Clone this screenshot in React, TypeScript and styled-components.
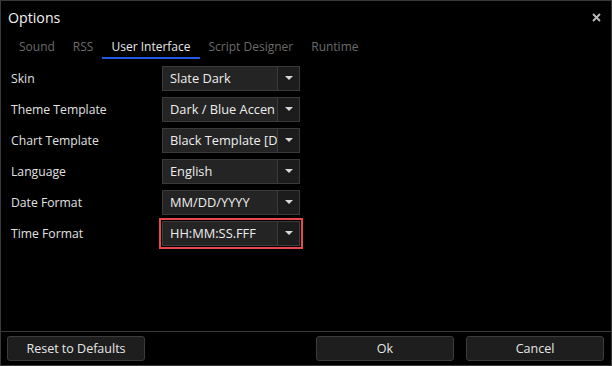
import React from "react";
import styled, { createGlobalStyle } from "styled-components";

const Global = createGlobalStyle`
  html, body { margin: 0; padding: 0; background: #000; }
  body { font-family: "Open Sans", "Noto Sans", sans-serif; }
`;

const Window = styled.div`
  width: 612px;
  height: 366px;
  box-sizing: border-box;
  border: 1px solid #3a3a3a;
  background: #000;
  color: #e6e6e6;
  display: flex;
  flex-direction: column;
`;

const TitleBar = styled.div`
  height: 32px;
  display: flex;
  align-items: center;
  justify-content: space-between;
  padding: 0 10px 0 7px;
  font-size: 14.2px;
  color: #f2f2f2;
`;

const Close = styled.svg`
  width: 9px;
  height: 9px;
`;

const Tabs = styled.div`
  display: flex;
  padding: 4px 0 0 9px;
  height: 22px;
`;

const Tab = styled.div<{ active?: boolean }>`
  padding: 0 9px;
  font-size: 12px;
  line-height: 19px;
  color: ${(p) => (p.active ? "#e8e8e8" : "#6b6b6b")};
  border-bottom: 2px solid ${(p) => (p.active ? "#2459e6" : "transparent")};
`;

const Content = styled.div`
  flex: 1;
  display: flex;
  flex-direction: column;
  gap: 6px;
  padding: 7px 0 0 10px;
`;

const Row = styled.div`
  display: flex;
  align-items: center;
  height: 25px;
`;

const Label = styled.div`
  width: 151px;
  font-size: 12.2px;
  color: #e0e0e0;
`;

const Combo = styled.div<{ highlight?: boolean }>`
  width: 138px;
  height: 25px;
  box-sizing: border-box;
  display: flex;
  border: 1px solid #3a3a3a;
  background: #242424;
  outline: ${(p) => (p.highlight ? "2px solid #e8474c" : "none")};
  outline-offset: 1px;
`;

const ComboText = styled.div`
  flex: 1;
  padding-left: 7px;
  font-size: 12.8px;
  line-height: 23px;
  white-space: nowrap;
  overflow: hidden;
  color: #eeeeee;
`;

const ComboButton = styled.div`
  width: 21px;
  flex-shrink: 0;
  border-left: 1px solid #3a3a3a;
  background: #1c1c1c;
  display: flex;
  align-items: center;
  justify-content: center;
`;

const Arrow = styled.div`
  width: 0;
  height: 0;
  border-left: 4px solid transparent;
  border-right: 4px solid transparent;
  border-top: 4px solid #d8d8d8;
  margin-top: -1px;
`;

const Footer = styled.div`
  border-top: 1px solid #3a3a3a;
  height: 34px;
  box-sizing: border-box;
  display: flex;
  align-items: center;
  padding: 0 7px 0 6px;
  gap: 12px;
`;

const Button = styled.div<{ push?: boolean }>`
  width: 138px;
  height: 25px;
  box-sizing: border-box;
  border: 1px solid #3c3c3c;
  border-radius: 3px;
  background: #1e1e1e;
  color: #e6e6e6;
  font-size: 12.5px;
  display: flex;
  align-items: center;
  justify-content: center;
  margin-left: ${(p) => (p.push ? "auto" : "0")};
`;

const rows = [
  { label: "Skin", value: "Slate Dark" },
  { label: "Theme Template", value: "Dark / Blue Accen" },
  { label: "Chart Template", value: "Black Template [D" },
  { label: "Language", value: "English" },
  { label: "Date Format", value: "MM/DD/YYYY" },
  { label: "Time Format", value: "HH:MM:SS.FFF", highlight: true },
];

export default function App() {
  return (
    <>
      <Global />
      <Window>
        <TitleBar>
          <span>Options</span>
          <Close viewBox="0 0 9 9">
            <path d="M1 1 L8 8 M8 1 L1 8" stroke="#bdbdbd" strokeWidth="1.8" />
          </Close>
        </TitleBar>
        <Tabs>
          <Tab>Sound</Tab>
          <Tab>RSS</Tab>
          <Tab active>User Interface</Tab>
          <Tab>Script Designer</Tab>
          <Tab>Runtime</Tab>
        </Tabs>
        <Content>
          {rows.map((r) => (
            <Row key={r.label}>
              <Label>{r.label}</Label>
              <Combo highlight={r.highlight}>
                <ComboText>{r.value}</ComboText>
                <ComboButton>
                  <Arrow />
                </ComboButton>
              </Combo>
            </Row>
          ))}
        </Content>
        <Footer>
          <Button>Reset to Defaults</Button>
          <Button push>Ok</Button>
          <Button>Cancel</Button>
        </Footer>
      </Window>
    </>
  );
}
